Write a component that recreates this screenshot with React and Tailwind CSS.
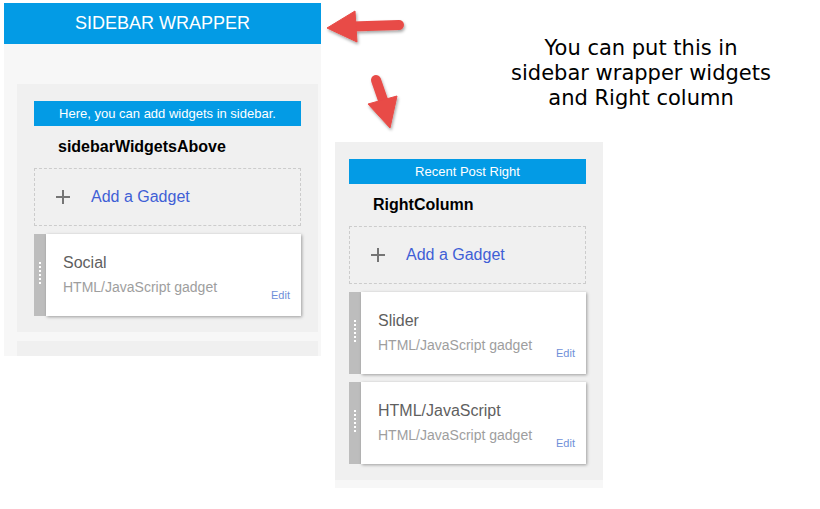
const sans = { fontFamily: '"Liberation Sans", Arial, sans-serif' };

function Handle() {
  return (
    <div className="w-[12px] shrink-0 bg-[#bdbdbd] flex items-center justify-center">
      <div className="flex flex-col gap-[2px] mt-[-4px]">
        {[0, 1, 2, 3, 4, 5].map((i) => (
          <div key={i} className="w-[2px] h-[2px] bg-white" />
        ))}
      </div>
    </div>
  );
}

function GadgetCard({ title }) {
  return (
    <div className="flex h-[82px] mt-[8px]">
      <Handle />
      <div className="flex-1 flex bg-white shadow-[1px_1px_3px_rgba(0,0,0,0.35)]">
        <div className="flex-1 pl-[17px] pt-[18px]">
          <div className="text-[16px] leading-[20px] mt-[1px] text-[#5f5f5f]">{title}</div>
          <div className="text-[14px] leading-[18px] mt-[5px] text-[#9e9e9e]">HTML/JavaScript gadget</div>
        </div>
        <div className="self-end mb-[14px] mr-[11px] text-[11px] leading-[13px] text-[#6f8fd8]">Edit</div>
      </div>
    </div>
  );
}

function AddGadget() {
  return (
    <div className="h-[58px] border border-dashed border-[#cccccc] flex items-center">
      <svg width="14" height="14" viewBox="0 0 14 14" className="ml-[21px]">
        <path d="M7 0v14M0 7h14" stroke="#757575" strokeWidth="2" />
      </svg>
      <span className="ml-[21px] text-[16px] text-[#3f5fd6]">Add a Gadget</span>
    </div>
  );
}

function Section({ label, name, children, className }) {
  return (
    <div className={"bg-[#f0f0f0] pt-[17px] pb-[16px] " + className}>
      <div className="h-[25px] bg-[#039be5] text-white text-[13px] flex items-center justify-center">{label}</div>
      <div className="h-[42px] flex items-center pl-[24px] text-[16px] font-bold text-black">{name}</div>
      <AddGadget />
      {children}
    </div>
  );
}

export default function App() {
  return (
    <div className="relative w-[820px] h-[509px] bg-white flex items-start overflow-hidden" style={sans}>
      <div className="ml-[4px] mt-[3px] w-[317px] h-[353px] bg-[#f7f7f7] flex flex-col overflow-hidden">
        <div className="h-[41px] bg-[#039be5] text-white text-[18px] flex items-center justify-center shrink-0">SIDEBAR WRAPPER</div>
        <div className="pl-[13px] pr-[3px] pt-[40px] flex flex-col">
          <Section label="Here, you can add widgets in sidebar." name="sidebarWidgetsAbove" className="pl-[17px] pr-[17px]">
            <GadgetCard title="Social" />
          </Section>
          <div className="mt-[9px] h-[40px] bg-[#f0f0f0]" />
        </div>
      </div>

      <div className="ml-[14px] flex flex-col">
        <div
          className="ml-[146px] w-[320px] h-[109px] pt-[36px] text-center text-[21px] leading-[25px] text-black"
          style={{ fontFamily: '"DejaVu Sans", Verdana, sans-serif' }}
        >
          You can put this in
          <br />
          sidebar wrapper widgets
          <br />
          and Right column
        </div>
        <div className="mt-[33px] w-[268px] bg-[#f7f7f7] pb-[8px]">
          <Section label="Recent Post Right" name="RightColumn" className="pl-[14px] pr-[17px]">
            <GadgetCard title="Slider" />
            <GadgetCard title="HTML/JavaScript" />
          </Section>
        </div>
      </div>

      <svg className="absolute inset-0 pointer-events-none" width="820" height="509">
        <defs>
          <filter id="sh" x="-30%" y="-30%" width="160%" height="160%">
            <feDropShadow dx="1" dy="2" stdDeviation="1.5" floodColor="#000" floodOpacity="0.35" />
          </filter>
        </defs>
        <g fill="#e84b47" stroke="#e84b47" filter="url(#sh)">
          <line x1="352" y1="26.5" x2="399" y2="25" strokeWidth="10" strokeLinecap="round" />
          <polygon points="327,28 355,11 357,42" strokeWidth="1" strokeLinejoin="round" />
          <line x1="376" y1="80" x2="384" y2="103" strokeWidth="10" strokeLinecap="round" />
          <polygon points="368,104 397,96 390,128" strokeWidth="1" strokeLinejoin="round" />
        </g>
      </svg>
    </div>
  );
}
